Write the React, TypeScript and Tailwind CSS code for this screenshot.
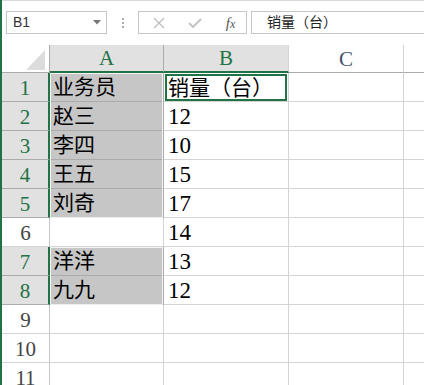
import React from "react";

const GREEN = "#217346";

const rows = [
  { a: "业务员", b: "销量（台）" },
  { a: "赵三", b: "12" },
  { a: "李四", b: "10" },
  { a: "王五", b: "15" },
  { a: "刘奇", b: "17" },
  { a: "", b: "14" },
  { a: "洋洋", b: "13" },
  { a: "九九", b: "12" },
  { a: "", b: "" },
  { a: "", b: "" },
  { a: "", b: "" },
];

// rows that are part of the A-column selection
const selectedRows = [0, 1, 2, 3, 4, 6, 7];

const cellFont = {
  fontFamily: '"Liberation Serif", "Noto Sans CJK SC", serif',
};

function ACell({ text, sel }: { text: string; sel: boolean }) {
  return (
    <div
      className={`h-[29px] pl-[3px] pt-[2px] flex items-center text-[21px] text-black whitespace-nowrap border-b border-r ${
        sel ? "bg-[#c6c6c6] border-[#ababab]" : "bg-white border-[#d4d4d4]"
      }`}
    >
      {text}
    </div>
  );
}

function Selection({ from, to }: { from: number; to: number }) {
  return (
    <div className="relative">
      {rows.slice(from, to + 1).map((r, i) => (
        <ACell key={i} text={r.a} sel />
      ))}
      <div className="absolute left-0 top-0 right-[1px] bottom-0 border border-white/80 pointer-events-none" />
    </div>
  );
}

function NameBox() {
  return (
    <div className="w-[101px] h-[23px] border border-[#c6c6c6] flex items-center justify-between pl-[6px] pr-[5px] text-[14px] text-[#333]">
      <span>B1</span>
      <svg width="8" height="5" viewBox="0 0 8 5">
        <polygon points="0,0 8,0 4,4.5" fill="#777" />
      </svg>
    </div>
  );
}

function Toolbar() {
  return (
    <div
      className="h-[45px] border-t border-[#d9d9d9] flex items-start pt-[10px] pl-[4px]"
      style={{ fontFamily: '"Liberation Sans", "Noto Sans CJK SC", sans-serif' }}
    >
      <NameBox />
      <div className="w-[31px] h-[23px] flex flex-col items-center justify-center gap-[2px]">
        <span className="w-[2px] h-[2px] bg-[#aaa]" />
        <span className="w-[2px] h-[2px] bg-[#aaa]" />
        <span className="w-[2px] h-[2px] bg-[#aaa]" />
      </div>
      <div className="w-[109px] h-[23px] border border-[#c6c6c6] flex items-center">
        <div className="w-[40px] flex justify-center">
          <svg width="12" height="12" viewBox="0 0 12 12">
            <path d="M1 1L11 11M11 1L1 11" stroke="#bdbdbd" strokeWidth="1.3" />
          </svg>
        </div>
        <div className="w-[32px] flex justify-center">
          <svg width="14" height="10" viewBox="0 0 14 10">
            <path d="M1 5L5 9L13 1" stroke="#c4c4c4" strokeWidth="2" fill="none" />
          </svg>
        </div>
        <div
          className="flex-1 pl-[4px] text-center italic text-[#555] leading-none"
          style={{ fontFamily: '"Liberation Serif", serif' }}
        >
          <span className="text-[15px]">f</span>
          <span className="text-[12px]">x</span>
        </div>
      </div>
      <div className="flex-1 ml-[4px] h-[23px] border border-r-0 border-[#c6c6c6] flex items-center pl-[15px] text-[14px] text-[#222]">
        销量（台）
      </div>
    </div>
  );
}

export default function App() {
  return (
    <div className="w-[424px] h-[385px] overflow-hidden bg-white border-l-2 border-[#217346]">
      <Toolbar />
      <div className="flex" style={cellFont}>
        {/* row headers */}
        <div className="w-[48px] shrink-0">
          <div className="h-[28px] border-r border-b border-[#ababab] bg-white flex items-end justify-end pr-[4px] pb-[2px]">
            <svg width="19" height="20" viewBox="0 0 19 20">
              <polygon points="19,0 19,20 0,20" fill="#dcdcdc" />
            </svg>
          </div>
          {rows.map((_, i) => {
            const sel = selectedRows.includes(i);
            return (
              <div
                key={i}
                className={`h-[29px] flex items-center justify-center pt-[3px] text-[21px] border-b ${
                  sel
                    ? "bg-[#e1e1e1] text-[#217346] border-b-[#ababab] border-r-2 border-r-[#217346]"
                    : "bg-white text-[#444] border-b-[#d4d4d4] border-r border-r-[#c6c6c6]"
                }`}
              >
                {i + 1}
              </div>
            );
          })}
        </div>

        {/* column A */}
        <div className="w-[114px] shrink-0">
          <div
            className="h-[28px] bg-[#e1e1e1] border-r border-r-[#ababab] border-b-2 flex items-center justify-center pt-[2px] text-[21px]"
            style={{ borderBottomColor: GREEN, color: GREEN }}
          >
            A
          </div>
          <Selection from={0} to={4} />
          <ACell text="" sel={false} />
          <Selection from={6} to={7} />
          {rows.slice(8).map((r, i) => (
            <ACell key={i} text={r.a} sel={false} />
          ))}
        </div>

        {/* column B */}
        <div className="w-[125px] shrink-0">
          <div
            className="h-[28px] bg-[#e1e1e1] border-r border-r-[#d4d4d4] border-b-2 flex items-center justify-center pt-[2px] text-[21px]"
            style={{ borderBottomColor: GREEN, color: GREEN }}
          >
            B
          </div>
          {rows.map((r, i) => (
            <div
              key={i}
              className={`relative h-[29px] pl-[4px] pt-[3px] flex items-center whitespace-nowrap text-black border-b border-r border-[#d4d4d4] ${
                i === 0 ? "text-[21px]" : "text-[23px]"
              }`}
            >
              {r.b}
              {i === 0 && (
                <div className="absolute left-[1px] top-[1px] right-[1px] bottom-0 border-2 border-[#217346] pointer-events-none" />
              )}
            </div>
          ))}
        </div>

        {/* column C */}
        <div className="w-[115px] shrink-0">
          <div className="h-[28px] bg-white border-r border-r-[#d4d4d4] border-b border-b-[#ababab] flex items-center justify-center pt-[2px] text-[21px] text-[#44546a]">
            C
          </div>
          {rows.map((_, i) => (
            <div key={i} className="h-[29px] border-b border-r border-[#d4d4d4]" />
          ))}
        </div>

        {/* column D (partly visible) */}
        <div className="flex-1">
          <div className="h-[28px] bg-white border-b border-b-[#ababab]" />
          {rows.map((_, i) => (
            <div key={i} className="h-[29px] border-b border-[#d4d4d4]" />
          ))}
        </div>
      </div>
    </div>
  );
}
